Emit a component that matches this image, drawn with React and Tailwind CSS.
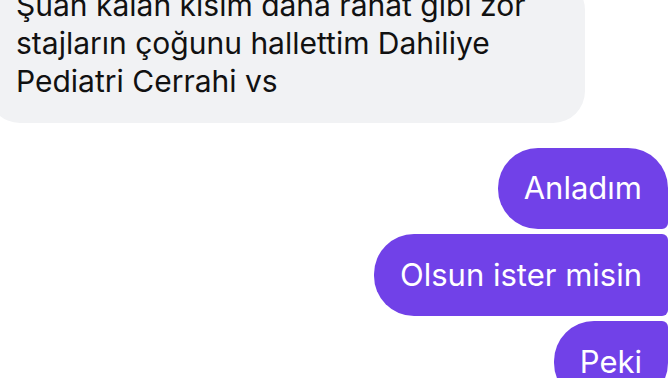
export default function App() {
  return (
    <div
      className="w-[672px] h-[378px] overflow-hidden bg-white flex flex-col"
      style={{ fontFamily: "Inter, 'Noto Sans', sans-serif" }}
    >
      <div className="ml-[-12px] mt-[-22px] w-[597px] rounded-[32px] bg-[#f1f2f4] pl-[28px] pr-4 pt-[8px] pb-[23px] text-[30px] leading-[38px] text-[#111111]">
        <div>Şuan kalan kısım daha rahat gibi zor</div>
        <div>stajların çoğunu hallettim Dahiliye</div>
        <div>Pediatri Cerrahi vs</div>
      </div>
      <div className="mt-[25px] flex flex-col items-end gap-[5px] pr-[4px] text-[31px] text-white">
        <div className="h-[81px] flex items-center px-[26px] bg-[#7141e8] rounded-tl-[40px] rounded-tr-[40px] rounded-bl-[40px] rounded-br-[6px]">
          Anladım
        </div>
        <div className="h-[82px] flex items-center px-[26px] bg-[#7141e8] rounded-l-[40px] rounded-r-[6px]">
          Olsun ister misin
        </div>
        <div className="h-[82px] flex items-center px-[26px] bg-[#7141e8] rounded-tl-[40px] rounded-bl-[40px] rounded-tr-[6px] rounded-br-[40px]">
          Peki
        </div>
      </div>
    </div>
  );
}
